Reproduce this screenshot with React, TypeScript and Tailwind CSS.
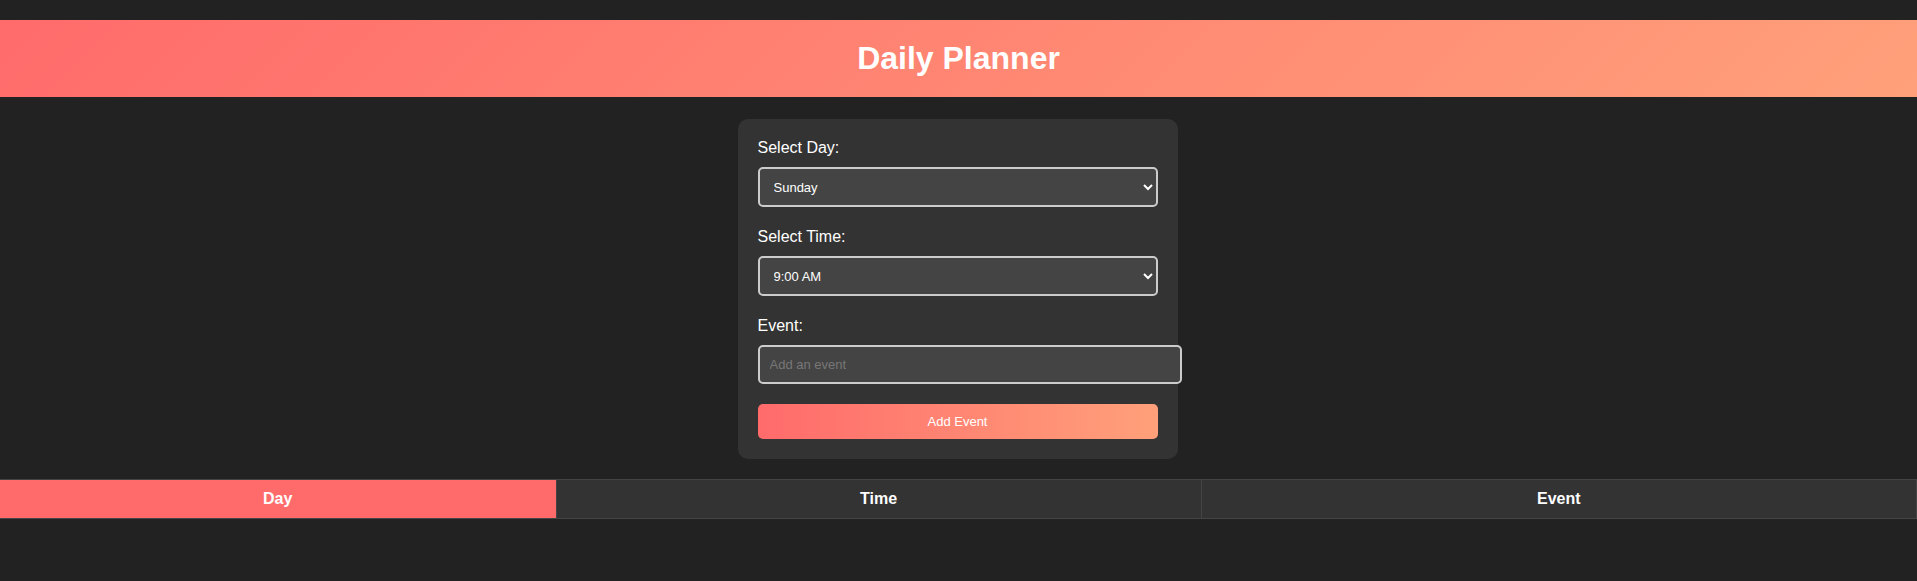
import { useState } from 'react';

const days = ["Sunday", "Monday", "Tuesday", "Wednesday", "Thursday", "Friday", "Saturday"];
const times = ["9:00 AM", "10:00 AM", "11:00 AM", "12:00 PM", "1:00 PM", "2:00 PM", "3:00 PM", "4:00 PM", "5:00 PM"];

export default function App() {
  const [day, setDay] = useState("Sunday");
  const [time, setTime] = useState("9:00 AM");
  const [eventInput, setEventInput] = useState("");

  return (
    <main className="min-h-screen bg-[#222] pt-5 text-white font-['Liberation_Sans',Arial,sans-serif]">
      <header className="bg-[linear-gradient(135deg,#ff6b6b,#ffa07a)] py-5 text-center">
        <h1 className="text-[32px] font-bold leading-[37px]">Daily Planner</h1>
      </header>

      <div className="mx-auto mt-[22px] w-[440px] -translate-x-[1px] rounded-[10px] bg-[#333] p-5">
        <label htmlFor="day" className="mb-2.5 block text-base leading-[18px]">Select Day:</label>
        <select
          id="day"
          value={day}
          onChange={(e) => setDay(e.target.value)}
          className="mb-[21px] block h-10 w-full appearance-auto rounded-[5px] border-2 border-[#ccc] bg-[#444] px-2.5 text-[13px] text-white"
        >
          {days.map((d) => <option key={d}>{d}</option>)}
        </select>

        <label htmlFor="time" className="mb-2.5 block text-base leading-[18px]">Select Time:</label>
        <select
          id="time"
          value={time}
          onChange={(e) => setTime(e.target.value)}
          className="mb-[21px] block h-10 w-full appearance-auto rounded-[5px] border-2 border-[#ccc] bg-[#444] px-2.5 text-[13px] text-white"
        >
          {times.map((t) => <option key={t}>{t}</option>)}
        </select>

        <label htmlFor="event" className="mb-2.5 block text-base leading-[18px]">Event:</label>
        <input
          id="event"
          type="text"
          value={eventInput}
          onChange={(e) => setEventInput(e.target.value)}
          placeholder="Add an event"
          className="mb-5 block h-[39px] w-[424px] rounded-[5px] border-2 border-[#ccc] bg-[#444] px-2.5 text-[13px] text-white placeholder:text-[#777] outline-none"
        />

        <button className="block h-[35px] w-full rounded-[5px] bg-[linear-gradient(90deg,#ff6b6b,#ffa07a)] text-[13px] text-white">
          Add Event
        </button>
      </div>

      <table className="mt-5 w-full table-fixed border-collapse text-base">
        <thead>
          <tr>
            <th className="h-[39px] w-[556px] border-y border-r border-[#444] bg-[#ff6b6b] font-bold">Day</th>
            <th className="h-[39px] w-[645px] border border-[#444] bg-[#333] font-bold">Time</th>
            <th className="h-[39px] border border-[#444] bg-[#333] font-bold">Event</th>
          </tr>
        </thead>
        <tbody></tbody>
      </table>
    </main>
  );
}
